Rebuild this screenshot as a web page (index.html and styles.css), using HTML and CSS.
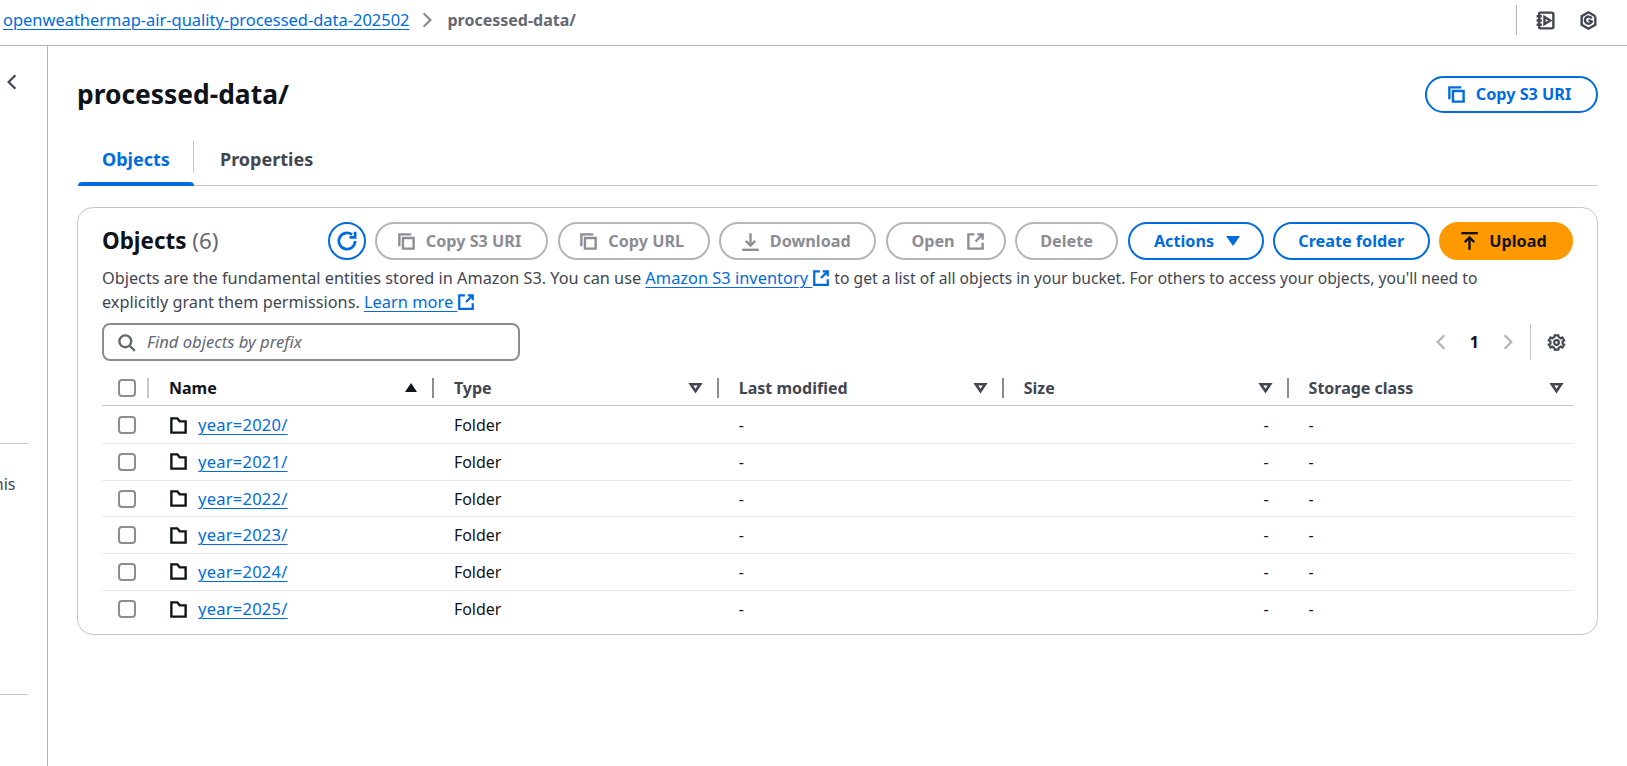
FILE: index.html
```html
<!DOCTYPE html>
<html lang="en">
<head>
<meta charset="utf-8">
<title>processed-data/ - S3 bucket</title>
<link rel="stylesheet" href="styles.css">
</head>
<body>
<svg class="sprites" aria-hidden="true">
  <symbol id="i-copy" viewBox="0 0 16 16"><path d="M2 12V2h10"/><path d="M5 5h9v9H5z"/></symbol>
  <symbol id="i-ext" viewBox="0 0 16 16"><path d="M14 9v5H2V2h5"/><path d="M9.5 2H14v4.5"/><path d="M14 2 8 8"/></symbol>
  <symbol id="i-download" viewBox="0 0 16 16"><path d="M1 15h14"/><path d="M8 1v10"/><path d="m4 7.5 4 4 4-4"/></symbol>
  <symbol id="i-upload" viewBox="0 0 16 16"><path d="M1 1h14"/><path d="M8 15V5"/><path d="m4 8.5 4-4 4 4"/></symbol>
  <symbol id="i-refresh" viewBox="0 0 16 16"><path d="M14.5 8A6.5 6.5 0 1 1 12 2.9"/><path d="M14.5 0.5V5H10"/></symbol>
  <symbol id="i-search" viewBox="0 0 16 16"><circle cx="7" cy="7" r="5"/><path d="m10.5 10.5 4.5 4.5"/></symbol>
  <symbol id="i-gear" viewBox="0 0 16 16"><path d="M13.14 8c0-.3-.03-.6-.08-.9l1.43-.8-1.5-2.6-1.42.8c-.45-.4-1-.72-1.57-.9L9.5 2h-3l-.5 1.6c-.58.18-1.12.5-1.57.9l-1.42-.8-1.5 2.6 1.43.8a5 5 0 0 0 0 1.8l-1.43.8 1.5 2.6 1.42-.8c.45.4 1 .72 1.57.9l.5 1.6h3l.5-1.6c.58-.18 1.12-.5 1.57-.9l1.42.8 1.5-2.6-1.43-.8c.05-.3.08-.6.08-.9z"/><circle cx="8" cy="8" r="2"/></symbol>
  <symbol id="i-folder" viewBox="0 0 16 16"><path d="M2 2h5l2 2.5h5V14H2z"/></symbol>
  <symbol id="i-filter" viewBox="0 0 16 16"><path d="M3 4.5h10L8 12z"/></symbol>
  <symbol id="i-left" viewBox="0 0 16 16"><path d="M11 2 5 8l6 6"/></symbol>
  <symbol id="i-right" viewBox="0 0 16 16"><path d="m5 2 6 6-6 6"/></symbol>
  <symbol id="i-notebook" viewBox="0 0 20 20"><path d="M5 2.5h11a1.5 1.5 0 0 1 1.5 1.5v12a1.5 1.5 0 0 1-1.5 1.5H5a1 1 0 0 1-1-1V3.5a1 1 0 0 1 1-1z"/><path d="M1.5 6h5M1.5 10h5M1.5 14h5"/><path class="fill" d="M9 6.5v7l5.5-3.5z"/></symbol>
  <symbol id="i-hex" viewBox="0 0 20 20"><path d="M16.5 6.2V14L10 17.8 3.5 14V6L10 2.2l6.5 3.8"/><path d="M13 8a3.4 3.4 0 1 0 .4 2"/><path d="M10 9.5l3.5 2"/></symbol>
</svg>

<header class="topbar">
  <nav class="crumbs">
    <a class="link" href="#">openweathermap-air-quality-processed-data-202502</a>
    <svg class="ic crumb-sep"><use href="#i-right"/></svg>
    <span class="crumb-current">processed-data/</span>
  </nav>
  <div class="top-tools">
    <span class="vline"></span>
    <svg class="ic top-ic"><use href="#i-notebook"/></svg>
    <svg class="ic top-ic"><use href="#i-hex"/></svg>
  </div>
</header>

<div class="shell">
  <aside class="rail">
    <svg class="ic rail-back"><use href="#i-left"/></svg>
    <hr class="rail-rule rail-rule-a">
    <p class="rail-text">this</p>
    <hr class="rail-rule rail-rule-b">
  </aside>

  <main class="content">
    <div class="page-head">
      <h1>processed-data/</h1>
      <button class="btn btn-normal btn-top"><svg class="ic"><use href="#i-copy"/></svg>Copy S3 URI</button>
    </div>

    <div class="tabs">
      <span class="tab tab-active">Objects</span>
      <span class="tab">Properties</span>
    </div>

    <section class="card">
      <div class="card-head">
        <h2>Objects <span class="count">(6)</span></h2>
        <div class="actions">
          <button class="btn-icon" aria-label="Refresh"><svg class="ic"><use href="#i-refresh"/></svg></button>
          <button class="btn btn-off btn-s3"><svg class="ic"><use href="#i-copy"/></svg>Copy S3 URI</button>
          <button class="btn btn-off btn-url"><svg class="ic"><use href="#i-copy"/></svg>Copy URL</button>
          <button class="btn btn-off btn-dl"><svg class="ic"><use href="#i-download"/></svg>Download</button>
          <button class="btn btn-off btn-open">Open<svg class="ic"><use href="#i-ext"/></svg></button>
          <button class="btn btn-off btn-del">Delete</button>
          <button class="btn btn-normal btn-act">Actions<span class="caret"></span></button>
          <button class="btn btn-normal btn-new">Create folder</button>
          <button class="btn btn-primary"><svg class="ic"><use href="#i-upload"/></svg>Upload</button>
        </div>
      </div>
      <p class="desc">Objects are the fundamental entities stored in Amazon S3. You can use <a class="link" href="#">Amazon S3 inventory </a><svg class="ic ext"><use href="#i-ext"/></svg><span class="desc-tail"> to get a list of all objects in your bucket. For others to access your objects, you'll need to</span> explicitly grant them permissions. <a class="link" href="#">Learn more </a><svg class="ic ext"><use href="#i-ext"/></svg></p>

      <div class="filter-row">
        <label class="search">
          <svg class="ic"><use href="#i-search"/></svg>
          <span class="placeholder">Find objects by prefix</span>
        </label>
        <div class="pager">
          <svg class="ic pg-off"><use href="#i-left"/></svg>
          <span class="pg-num">1</span>
          <svg class="ic pg-off"><use href="#i-right"/></svg>
          <span class="pg-line"></span>
          <svg class="ic pg-gear"><use href="#i-gear"/></svg>
        </div>
      </div>

      <div class="table">
        <div class="row row-head">
          <div class="cell cell-check"><span class="check"></span><i class="sep sep-light"></i></div>
          <div class="cell th th-name">Name<span class="sort-up"></span><i class="sep"></i></div>
          <div class="cell th">Type<svg class="ic filt"><use href="#i-filter"/></svg><i class="sep"></i></div>
          <div class="cell th">Last modified<svg class="ic filt"><use href="#i-filter"/></svg><i class="sep"></i></div>
          <div class="cell th">Size<svg class="ic filt"><use href="#i-filter"/></svg><i class="sep"></i></div>
          <div class="cell th">Storage class<svg class="ic filt"><use href="#i-filter"/></svg></div>
        </div>
        <div class="row"><div class="cell cell-check"><span class="check"></span></div><div class="cell td-name"><svg class="ic folder"><use href="#i-folder"/></svg><a class="link" href="#">year=2020/</a></div><div class="cell">Folder</div><div class="cell">-</div><div class="cell cell-num">-</div><div class="cell">-</div></div>
        <div class="row"><div class="cell cell-check"><span class="check"></span></div><div class="cell td-name"><svg class="ic folder"><use href="#i-folder"/></svg><a class="link" href="#">year=2021/</a></div><div class="cell">Folder</div><div class="cell">-</div><div class="cell cell-num">-</div><div class="cell">-</div></div>
        <div class="row"><div class="cell cell-check"><span class="check"></span></div><div class="cell td-name"><svg class="ic folder"><use href="#i-folder"/></svg><a class="link" href="#">year=2022/</a></div><div class="cell">Folder</div><div class="cell">-</div><div class="cell cell-num">-</div><div class="cell">-</div></div>
        <div class="row"><div class="cell cell-check"><span class="check"></span></div><div class="cell td-name"><svg class="ic folder"><use href="#i-folder"/></svg><a class="link" href="#">year=2023/</a></div><div class="cell">Folder</div><div class="cell">-</div><div class="cell cell-num">-</div><div class="cell">-</div></div>
        <div class="row"><div class="cell cell-check"><span class="check"></span></div><div class="cell td-name"><svg class="ic folder"><use href="#i-folder"/></svg><a class="link" href="#">year=2024/</a></div><div class="cell">Folder</div><div class="cell">-</div><div class="cell cell-num">-</div><div class="cell">-</div></div>
        <div class="row row-last"><div class="cell cell-check"><span class="check"></span></div><div class="cell td-name"><svg class="ic folder"><use href="#i-folder"/></svg><a class="link" href="#">year=2025/</a></div><div class="cell">Folder</div><div class="cell">-</div><div class="cell cell-num">-</div><div class="cell">-</div></div>
      </div>
    </section>
  </main>
</div>
</body>
</html>
```
FILE: styles.css
```css
* { box-sizing: border-box; }
html, body { height: 100%; }
body {
  margin: 0;
  background: #fff;
  color: #0f141a;
  font: 16px/22px "Noto Sans", "Open Sans", sans-serif;
  overflow: hidden;
}
.sprites { display: none; }
.ic {
  width: 19px; height: 19px; flex: none;
  fill: none; stroke: currentColor; stroke-width: 2;
}
.link { color: #006ce0; text-decoration: underline; text-underline-offset: 3px; text-decoration-thickness: 1px; }

/* top bar */
.topbar {
  height: 46px;
  display: flex; align-items: center; justify-content: space-between;
  border-bottom: 1px solid #b4b4bb;
  padding: 0 28px 5px 3px;
}
.crumbs { display: flex; align-items: center; font-size: 16.45px; }
.crumb-sep { width: 18px; height: 18px; color: #8c8c94; margin: 0 11px 0 9px; }
.crumb-current { font-size: 16px; font-weight: 700; color: #656871; }
.top-tools { display: flex; align-items: center; gap: 22px; }
.vline { width: 1px; height: 30px; background: #b4b4bb; margin-right: -4px; }
.top-ic { width: 21px; height: 21px; color: #424650; stroke-width: 2.3; }

/* shell */
.shell { display: flex; height: 720px; }
.rail {
  width: 48px; flex: none;
  border-right: 1px solid #b4b4bb;
  overflow: hidden;
  display: flex; flex-direction: column;
}
.rail-back { width: 18px; height: 18px; margin: 27px 0 0 3px; color: #424650; }
.rail-rule { width: 28px; height: 1px; margin: 0; border: 0; background: #c6c6cd; flex: none; }
.rail-rule-a { margin-top: 352px; }
.rail-rule-b { margin-top: 199px; }
.rail-text { margin: 29px 0 0 -12px; color: #424650; white-space: nowrap; }

.content { flex: 1; min-width: 0; padding: 28px 29px 0 30px; }
.page-head { display: flex; align-items: center; justify-content: space-between; }
h1 { margin: 0 0 0 -1px; font-size: 26.4px; line-height: 40px; font-weight: 700; }

/* buttons */
.btn {
  height: 38px; display: inline-flex; align-items: center; justify-content: center; gap: 10px;
  padding: 0; border-radius: 20px; border: 2px solid #006ce0;
  background: #fff; color: #006ce0;
  font: 700 16.2px/22px "Noto Sans", "Open Sans", sans-serif;
  white-space: nowrap;
}
.btn-top { width: 173px; height: 37px; padding-right: 5px; }
.btn-off { border-color: #b4b4bb; color: #8c8c94; }
.btn-primary { background: #ff9900; border-color: #ff9900; color: #0f141a; gap: 10px; width: 134px; padding-right: 5px; }
.btn-icon {
  width: 38px; height: 38px; padding: 0; border-radius: 50%;
  border: 2px solid #006ce0; background: #fff; color: #006ce0;
  display: inline-flex; align-items: center; justify-content: center;
}
.btn-icon .ic { width: 20px; height: 20px; stroke-width: 2.2; }
.caret { width: 0; height: 0; border: 7.5px solid transparent; border-top: 10px solid #006ce0; border-bottom: 0; margin-left: 2px; }

/* tabs */
.tabs {
  display: flex; height: 45px; margin-top: 27px;
  border-bottom: 1px solid #c6c6cd;
}
.tab { position: relative; padding: 2px 25px 0 26px; font-weight: 700; font-size: 18px; line-height: 32px; color: #424650; height: 44px; }
.tab-active { color: #006ce0; width: 116px; padding-left: 24px; }
.tab-active::before { content: ""; position: absolute; left: 0; right: 0; bottom: -1px; height: 4px; background: #006ce0; border-radius: 4px 4px 0 0; }
.tab-active::after { content: ""; position: absolute; right: 0; top: 0; width: 1px; height: 32px; background: #c6c6cd; }

/* card */
.card {
  margin: 21px 0 0 -1px;
  border: 1px solid #c6c6cd; border-radius: 16px;
  padding: 14px 24px 6px 24px;
  height: 428px;
}
.card-head { display: flex; align-items: center; justify-content: space-between; height: 38px; }
h2 { margin: 0; font-size: 22.4px; line-height: 26px; font-weight: 700; }
.count { font-weight: 400; color: #656871; }
.actions { display: flex; align-items: center; gap: 9.25px; }
.btn-s3 { width: 173.5px; padding-right: 5px; }
.btn-url { width: 152.5px; padding-right: 4px; }
.btn-dl { width: 157px; padding-right: 4px; }
.btn-open { width: 120px; padding-left: 5px; gap: 11px; }
.btn-del { width: 103.5px; }
.btn-act { width: 136px; padding-left: 3px; }
.btn-new { width: 157px; }
.desc { margin: 6px 0 0; line-height: 23px; font-size: 16.28px; color: #424650; max-width: 1400px; }
.desc .link { font-size: 16.4px; }
.desc-tail { font-size: 15.65px; }
.ext { width: 18px; height: 18px; color: #006ce0; vertical-align: -3px; }

.filter-row { display: flex; justify-content: space-between; align-items: center; margin-top: 9px; height: 38px; }
.search {
  width: 418px; height: 38px; display: flex; align-items: center; gap: 11px;
  padding: 0 13px; border: 2px solid #8c8c94; border-radius: 8px; color: #656871;
}
.placeholder { font-style: italic; font-size: 16.6px; }
.pager { display: flex; align-items: center; color: #0f141a; margin-right: 7px; height: 38px; }
.pg-off { width: 18px; height: 18px; color: #b4b4bb; }
.pg-num { font-weight: 700; margin: 0 20px; }
.pg-line { width: 1px; height: 36px; background: #c6c6cd; margin: 0 16px 0 13px; }
.pg-gear { color: #424650; stroke-width: 1.8; }

/* table */
.table { margin-top: 9px; }
.row {
  display: grid; grid-template-columns: 47px repeat(4, 284.9px) 1fr;
  height: 36.7px; border-bottom: 1px solid #e8e8ec; align-items: center;
}
.row-last { border-bottom: 0; }
.row-head { height: 36px; border-bottom-color: #c6c6cd; font-weight: 700; color: #424650; }
.row-head + .row { height: 38px; padding-top: 1.5px; }
.cell { display: flex; align-items: center; padding-left: 20px; position: relative; height: 100%; }
.cell-check { padding-left: 16px; }
.check { width: 18px; height: 18px; border: 2px solid #8c8c94; border-radius: 4px; background: #fff; }
.th { padding-right: 9px; justify-content: space-between; }
.th-name { color: #0f141a; }
.sep { position: absolute; right: 0; top: 8px; width: 2px; height: 20px; background: #8c8c94; }
.sep-light { background: #c6c6cd; }
.filt { width: 15px; height: 15px; color: #424650; margin-right: 7px; stroke-width: 2.8; }
.th:last-child .filt { margin-right: 0; }
.sort-up { width: 0; height: 0; border: 6.5px solid transparent; border-bottom: 9px solid #0f141a; border-top: 0; margin-right: 8px; }
.td-name { gap: 10px; }
.td-name .link { font-size: 16.5px; letter-spacing: .25px; }
.folder { width: 19px; height: 19px; }
.cell-num { justify-content: flex-end; padding-right: 20px; }
```
